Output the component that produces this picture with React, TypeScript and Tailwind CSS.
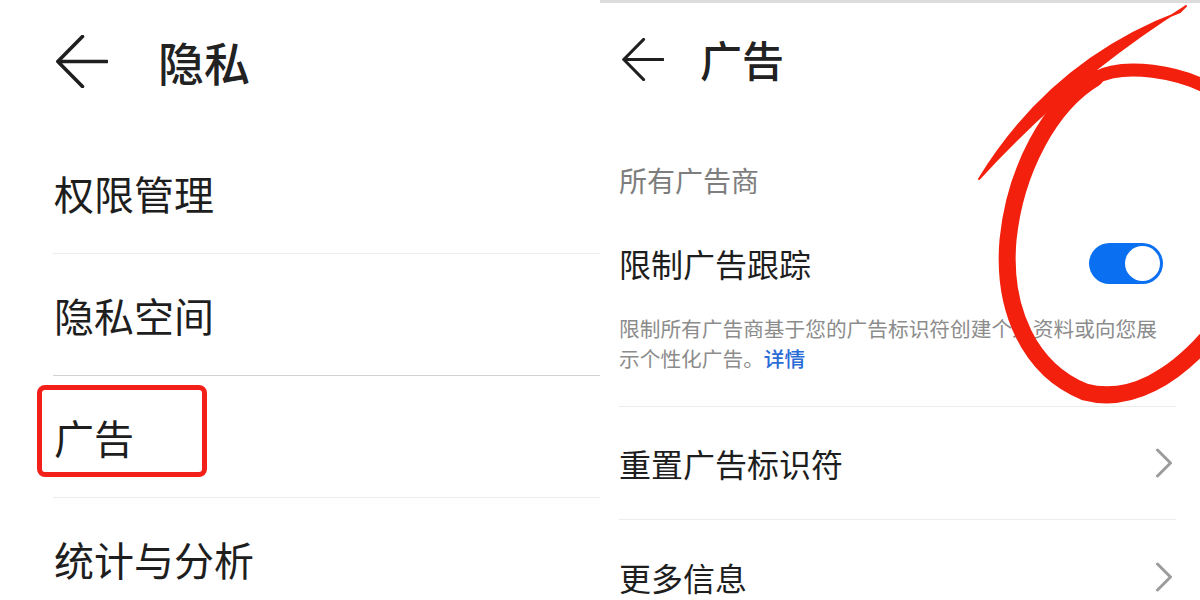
import React from 'react';

const FONT = { fontFamily: '"Noto Sans CJK SC", "Noto Sans", sans-serif' };

function BackArrow({ size }: { size: 'lg' | 'md' }) {
  const w = size === 'lg' ? 52 : 42;
  const h = size === 'lg' ? 53 : 43;
  return (
    <svg width={w} height={h} viewBox={`0 0 ${w} ${h}`} fill="none">
      <path
        d={`M${h / 2} 1.5 L1.8 ${h / 2} L${h / 2} ${h - 1.5} M1.8 ${h / 2} H${w - 1}`}
        stroke="#1f1f1f"
        strokeWidth={size === 'lg' ? 3.6 : 3.2}
        strokeLinecap="round"
        strokeLinejoin="round"
      />
    </svg>
  );
}

function Chevron() {
  return (
    <svg width="18" height="30" viewBox="0 0 18 30" fill="none">
      <path d="M2.5 2 L15.5 15 L2.5 28" stroke="#9c9c9c" strokeWidth="3" strokeLinecap="round" strokeLinejoin="round" />
    </svg>
  );
}

// 왼쪽: 隐私 메뉴
function PrivacyPanel() {
  const items = ['权限管理', '隐私空间', '广告', '统计与分析'];
  const borders = ['border-[#ececec]', 'border-[#d2d2d2]', 'border-[#ececec]', 'border-transparent'];
  return (
    <div className="w-[600px] h-full bg-white">
      <div className="h-[122px] flex items-center pl-[56px] gap-[50px]">
        <BackArrow size="lg" />
        <span className="text-[46px] leading-none font-medium text-[#222]">隐私</span>
      </div>
      <div className="pt-[10px] pl-[53px]">
        {items.map((label, i) => (
          <div key={label} className={`relative h-[122px] flex items-center border-b ${borders[i]}`}>
            <span className="pl-[1px] text-[40px] leading-none text-[#1e1e1e]">{label}</span>
            {label === '广告' && (
              <div className="absolute left-[-16px] top-[9px] w-[170px] h-[92px] border-[5px] border-[#f3201a] rounded-[8px]" />
            )}
          </div>
        ))}
      </div>
    </div>
  );
}

// 오른쪽: 广告 상세
function AdPanel() {
  return (
    <div className="w-[600px] h-full bg-white border-t-[3px] border-[#dcdcdc]">
      <div className="h-[112px] flex items-center pl-[22px] gap-[36px]">
        <BackArrow size="md" />
        <span className="text-[42px] leading-none font-medium text-[#222]">广告</span>
      </div>
      <div className="pl-[19px] pr-[24px]">
        <div className="h-[130px] flex items-center">
          <span className="text-[28px] leading-none text-[#7e7e7e]">所有广告商</span>
        </div>
        <div className="h-[36px] flex items-center justify-between">
          <span className="text-[32px] leading-none text-[#1e1e1e]">限制广告跟踪</span>
          <div className="mr-[13px] w-[74px] h-[41px] rounded-full bg-[#0b6ff1] flex items-center justify-end pr-[3px]">
            <div className="w-[35px] h-[35px] rounded-full bg-white" />
          </div>
        </div>
        <div className="mt-[32px] pb-[33px] border-b border-[#ececec]">
          <p className="max-w-[545px] text-[20.7px] leading-[30px] text-[#8c8c8c]">
            限制所有广告商基于您的广告标识符创建个人资料或向您展示个性化广告。
            <span className="text-[#2a6cd6] font-medium">详情</span>
          </p>
        </div>
        <div className="h-[113px] flex items-center justify-between border-b border-[#ececec]">
          <span className="text-[32px] leading-none text-[#1e1e1e]">重置广告标识符</span>
          <div className="mr-[3px]">
            <Chevron />
          </div>
        </div>
        <div className="h-[114px] flex items-center justify-between">
          <span className="text-[32px] leading-none text-[#1e1e1e]">更多信息</span>
          <div className="mr-[3px]">
            <Chevron />
          </div>
        </div>
      </div>
    </div>
  );
}

// 빨간 손글씨 동그라미 (주석 오버레이)
function RedCircle() {
  return (
    <svg className="absolute inset-0 pointer-events-none" width="1200" height="600" viewBox="0 0 1200 600" fill="none">
      <path d="M1186 6 Q1070 79 979 179 Q1052 60 1180 12 Z" fill="#f3200e" stroke="#f3200e" strokeWidth="2" strokeLinejoin="round" />
      <path
        d="M1212 90 C1180 72 1125 62 1095 78"
        stroke="#f3200e"
        strokeWidth="13"
        strokeLinecap="round"
      />
      <path
        d="M1095 78 C1050 105 1015 170 1008 240 C1002 310 1030 370 1085 392 C1130 404 1175 377 1212 333"
        stroke="#f3200e"
        strokeWidth="17"
        strokeLinecap="round"
        strokeLinejoin="round"
      />
    </svg>
  );
}

export default function App() {
  return (
    <div className="relative w-[1200px] h-[600px] overflow-hidden flex bg-white" style={FONT}>
      <PrivacyPanel />
      <AdPanel />
      <RedCircle />
    </div>
  );
}
